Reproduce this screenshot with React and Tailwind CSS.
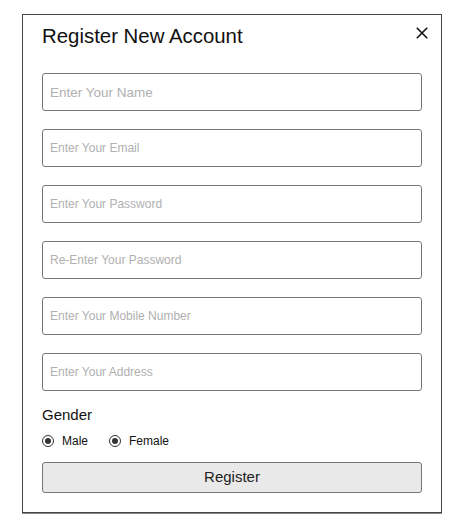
import React from 'react';

const fields = [
  { ph: 'Enter Your Name', big: true },
  { ph: 'Enter Your Email' },
  { ph: 'Enter Your Password', type: 'password' },
  { ph: 'Re-Enter Your Password', type: 'password' },
  { ph: 'Enter Your Mobile Number' },
  { ph: 'Enter Your Address' },
];

const Radio = ({ label }) => (
  <label className="flex items-center gap-[8px]">
    <span className="w-[12px] h-[12px] rounded-full border border-[#333] flex items-center justify-center">
      <span className="w-[6px] h-[6px] rounded-full bg-[#333]" />
    </span>
    <span className="text-[12px] text-[#111]">{label}</span>
  </label>
);

export default function App() {
  return (
    <div className="w-[466px] h-[528px] bg-white pt-[14px] pl-[22px]" style={{ fontFamily: '"Liberation Sans", Arial, sans-serif' }}>
      <div className="w-[420px] border border-[#444] shadow-[0_1px_0_#888] px-[19px] pt-[9px] pb-[19px]">
        {/* Header */}
        <div className="flex items-center justify-between h-[24px]">
          <h2 className="text-[20.4px] leading-[24px] text-[#111]">Register New Account</h2>
          <svg width="12" height="12" viewBox="0 0 12 12" className="-mr-[6px] -mt-[7px]">
            <path d="M0.8 0.8L11.2 11.2M11.2 0.8L0.8 11.2" stroke="#111" strokeWidth="1.6" />
          </svg>
        </div>

        {/* Inputs */}
        <div className="mt-[25px] flex flex-col gap-[18px]">
          {fields.map((f) => (
            <input
              key={f.ph}
              type={f.type || 'text'}
              placeholder={f.ph}
              className={`w-full h-[38px] border border-[#777] rounded-[3px] pl-[7px] outline-none placeholder:text-[#b0b0b0] ${f.big ? 'text-[13.5px]' : 'text-[12px]'}`}
            />
          ))}
        </div>

        {/* Gender */}
        <div className="mt-[15px] text-[15px] leading-[18px] text-[#111]">Gender</div>
        <div className="mt-[8px] h-[18px] flex items-center gap-[21px]">
          <Radio label="Male" />
          <Radio label="Female" />
        </div>

        <button className="mt-[12px] w-full h-[31px] bg-[#e9e9e9] border border-[#777] rounded-[3px] text-[15px] text-[#222]">
          Register
        </button>
      </div>
    </div>
  );
}
